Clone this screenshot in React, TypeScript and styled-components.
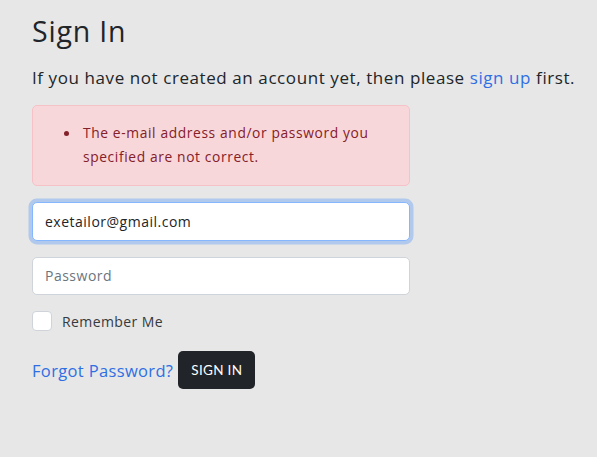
import React from "react";
import styled, { createGlobalStyle } from "styled-components";

const GlobalStyle = createGlobalStyle`
  html, body {
    margin: 0;
    padding: 0;
    background: #e7e7e7;
  }
  body {
    font-family: "Open Sans", "Liberation Sans", sans-serif;
    color: #212529;
    letter-spacing: 0.5px;
  }
  * {
    box-sizing: border-box;
  }
`;

const Page = styled.div`
  width: 597px;
  height: 457px;
  padding: 14px 32px 0;
`;

const Title = styled.h1`
  margin: 0;
  font-size: 28.5px;
  font-weight: 400;
  line-height: 34px;
  letter-spacing: 0.8px;
`;

const Lead = styled.p`
  margin: 18px 0 0;
  font-size: 17px;
  line-height: 24px;
  letter-spacing: 0.58px;
  white-space: nowrap;
`;

const Link = styled.a`
  color: #2f6fe4;
  text-decoration: none;
  cursor: pointer;
`;

const Alert = styled.div`
  margin-top: 15px;
  width: 378px;
  height: 81px;
  background: #f8d7da;
  border: 1px solid #f5c2c7;
  border-radius: 5px;
  color: #842029;
  padding: 14px 16px 0 48px;
`;

const ErrorList = styled.ul`
  margin: 0;
  padding: 0;
  font-size: 13.8px;
  line-height: 24px;
  letter-spacing: 0.62px;

  li {
    padding-left: 2px;
  }

  li::marker {
    font-size: 15px;
  }
`;

const Form = styled.form`
  width: 378px;
  margin-top: 16px;
  display: flex;
  flex-direction: column;
  gap: 16px;
`;

const Input = styled.input<{ $focused?: boolean }>`
  width: 100%;
  height: 38.5px;
  padding: 0 12px;
  font: inherit;
  font-size: 14px;
  letter-spacing: 0.5px;
  color: #212529;
  background: #fff;
  border: 1px solid ${(p) => (p.$focused ? "#86b7fe" : "#ced4da")};
  border-radius: 5px;
  outline: none;
  box-shadow: ${(p) => (p.$focused ? "0 0 0 3.5px rgba(13, 110, 253, 0.25)" : "none")};

  &::placeholder {
    color: #6c757d;
  }
`;

const CheckRow = styled.label`
  display: flex;
  align-items: center;
  gap: 10px;
  font-size: 14px;
  letter-spacing: 0.4px;
  color: #343a40;
`;

const Box = styled.span`
  width: 20px;
  height: 20px;
  background: #fff;
  border: 1px solid #ced4da;
  border-radius: 4px;
`;

const Actions = styled.div`
  display: flex;
  align-items: center;
  gap: 5px;
  margin-top: 4px;
`;

const ForgotLink = styled(Link)`
  font-size: 16.5px;
  letter-spacing: 0.35px;
`;

const Button = styled.button`
  height: 38px;
  padding: 0 13px;
  background: #212529;
  color: #fff;
  border: none;
  border-radius: 5px;
  font-family: "Lato", sans-serif;
  font-size: 13.5px;
  letter-spacing: 0.3px;
  text-transform: uppercase;
`;

export default function App() {
  return (
    <Page>
      <GlobalStyle />
      <Title>Sign In</Title>
      <Lead>
        If you have not created an account yet, then please <Link>sign up</Link> first.
      </Lead>
      <Alert>
        <ErrorList>
          <li>The e-mail address and/or password you specified are not correct.</li>
        </ErrorList>
      </Alert>
      <Form onSubmit={(e) => e.preventDefault()}>
        <Input $focused defaultValue="exetailor@gmail.com" />
        <Input type="password" placeholder="Password" />
        <CheckRow>
          <Box />
          Remember Me
        </CheckRow>
        <Actions>
          <ForgotLink>Forgot Password?</ForgotLink>
          <Button type="submit">Sign In</Button>
        </Actions>
      </Form>
    </Page>
  );
}
